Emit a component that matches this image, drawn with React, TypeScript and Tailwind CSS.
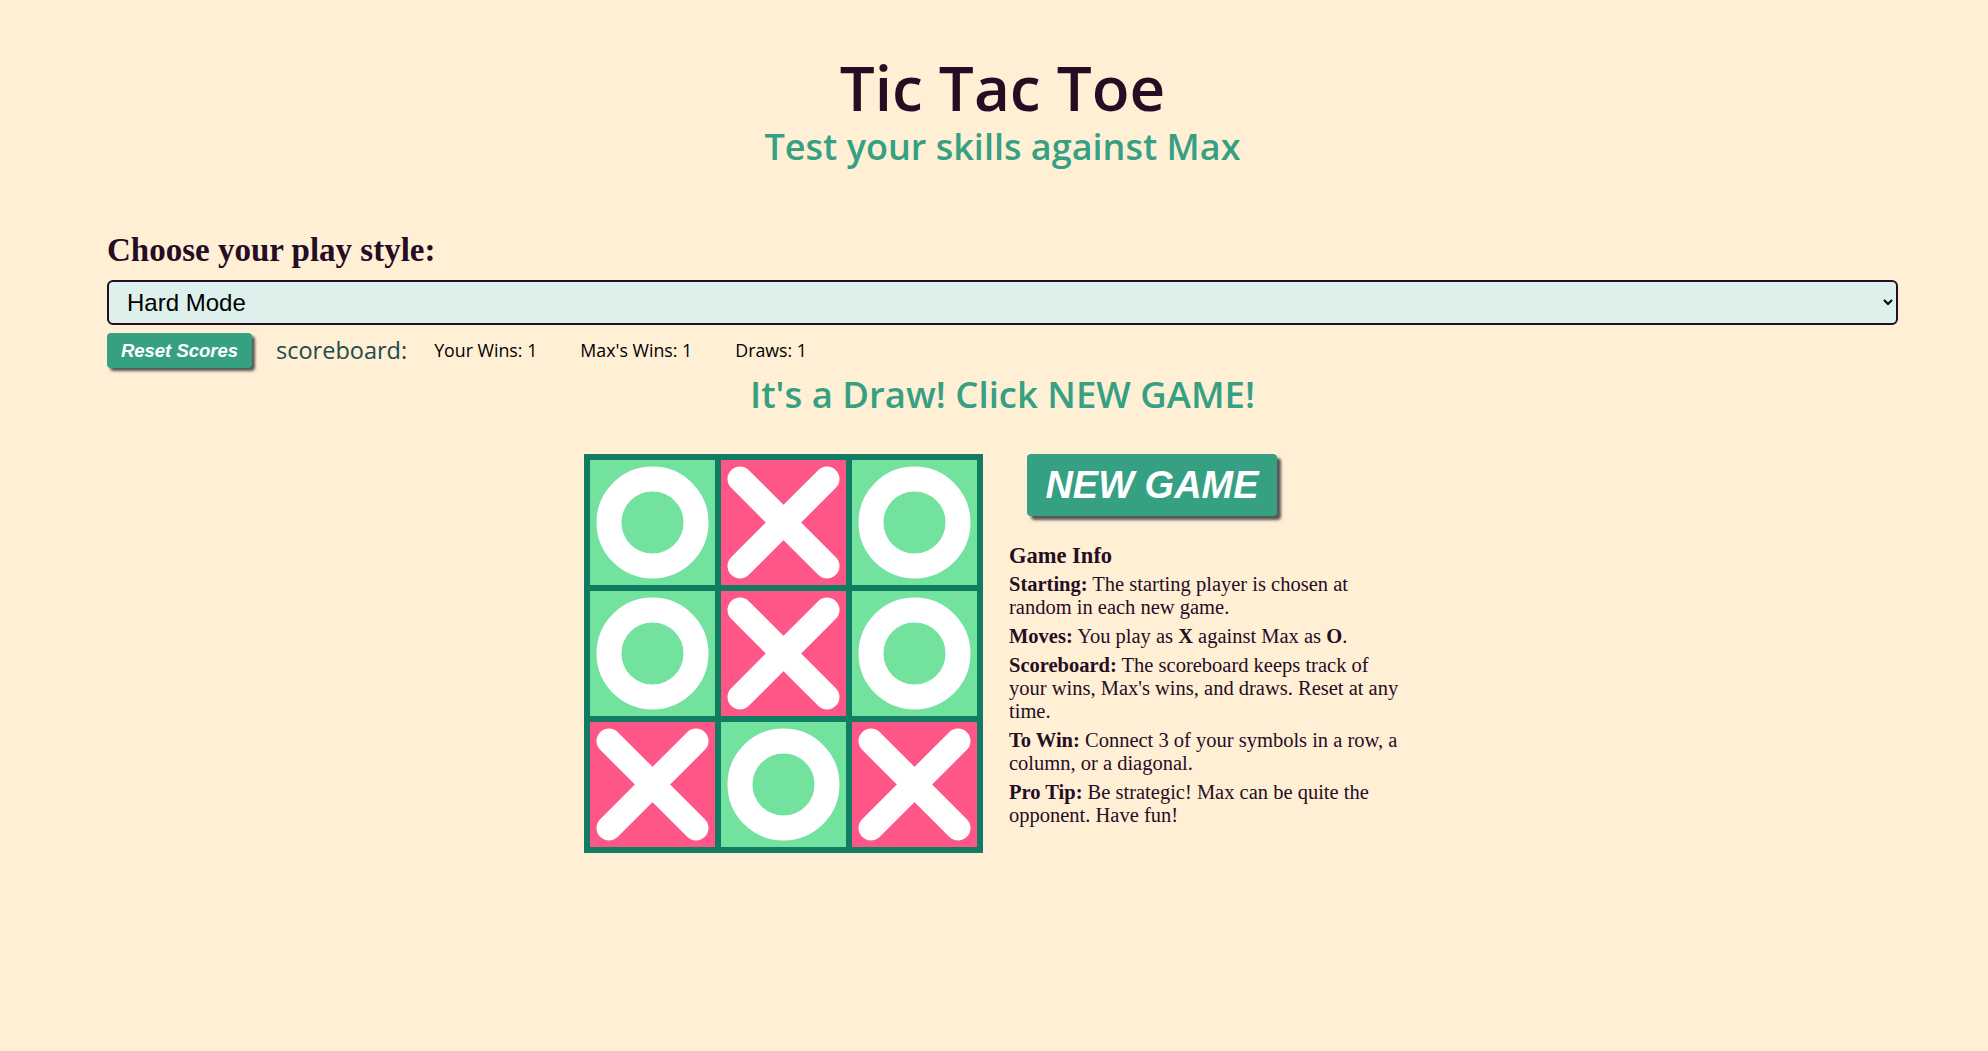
import { useState } from "react";

type Mark = "X" | "O";

const board: Mark[] = ["O", "X", "O", "O", "X", "O", "X", "O", "X"];

const heading = { fontFamily: '"Open Sans", "Noto Sans", sans-serif' };
const serif = { fontFamily: '"Liberation Serif", "DejaVu Serif", serif' };
const arial = { fontFamily: '"Liberation Sans", Arial, sans-serif' };

const Cell = ({ mark }: { mark: Mark }) => {
  if (mark === "O") {
    return (
      <div className="w-[125px] h-[125px] bg-[#73e29e]">
        <svg width="125" height="125" viewBox="0 0 125 125">
          <circle cx="62.5" cy="62.5" r="43.5" fill="none" stroke="#fff" strokeWidth="25" />
        </svg>
      </div>
    );
  }
  return (
    <div className="w-[125px] h-[125px] bg-[#fe5686]">
      <svg width="125" height="125" viewBox="0 0 125 125">
        <path d="M19 19 L106 106 M106 19 L19 106" stroke="#fff" strokeWidth="25" strokeLinecap="round" />
      </svg>
    </div>
  );
};

const App = () => {
  const [mode, setMode] = useState<string>("hard");
  const scores = { you: 1, max: 1, draws: 1 };

  return (
    <div className="min-h-[1051px] bg-[#ffefd5] pl-[107px] pr-[90px] pt-[51px]">
      <div className="text-center" style={heading}>
        <h1 className="text-[62px] leading-[72px] font-semibold text-[#250d24]">Tic Tac Toe</h1>
        <h2 className="mt-[4px] text-[36px] leading-[40px] font-semibold text-[#36a083]">Test your skills against Max</h2>
      </div>

      <h3 className="mt-[64px] text-[33px] leading-[38px] font-bold text-[#250d24]" style={serif}>
        Choose your play style:
      </h3>
      <select
        value={mode}
        onChange={(e) => setMode(e.target.value)}
        className="mt-[11px] block w-full h-[45px] pl-[14px] pr-[8px] text-[24px] bg-[#ddf0eb] border-2 border-[#250d24] rounded-md text-black"
        style={arial}
      >
        <option value="easy">Easy Mode</option>
        <option value="hard">Hard Mode</option>
      </select>

      <div className="mt-[8px] flex items-center">
        <button
          className="w-[145px] h-[35px] bg-[#36a083] text-white text-[18.5px] font-bold italic rounded-[4px] shadow-[3px_3px_3px_#555]"
          style={arial}
        >
          Reset Scores
        </button>
        <span className="ml-[24px] text-[23.5px] text-[#1b4b4a]" style={heading}>scoreboard:</span>
        <span className="ml-[27px] text-[17.8px] text-black" style={heading}>Your Wins: {scores.you}</span>
        <span className="ml-[43px] text-[17.8px] text-black" style={heading}>Max's Wins: {scores.max}</span>
        <span className="ml-[43px] text-[17.8px] text-black" style={heading}>Draws: {scores.draws}</span>
      </div>

      <p className="mt-[4px] text-center text-[36.5px] leading-[44px] font-semibold text-[#36a083]" style={heading}>
        It's a Draw! Click NEW GAME!
      </p>

      <div className="mt-[38px] flex justify-center items-start gap-[26px]">
        <div className="grid grid-cols-3 gap-[6px] p-[6px] bg-[#127c62]">
          {board.map((m, i) => (
            <Cell key={i} mark={m} />
          ))}
        </div>
        <div className="w-[412px]">
          <button
            className="ml-[18px] w-[250px] h-[62px] bg-[#36a083] text-white text-[38px] font-bold italic rounded-[4px] shadow-[4px_4px_3px_#555]"
            style={arial}
          >
            NEW GAME
          </button>
          <div className="mt-[25px] w-[400px] text-[20.5px] leading-[23px] text-[#250d24]" style={serif}>
            <h4 className="text-[22.5px] leading-[30px] font-bold">Game Info</h4>
            <p className="mt-[2px]">
              <b>Starting:</b> The starting player is chosen at random in each new game.
            </p>
            <p className="mt-[6px]">
              <b>Moves:</b> You play as <b>X</b> against Max as <b>O</b>.
            </p>
            <p className="mt-[6px]">
              <b>Scoreboard:</b> The scoreboard keeps track of your wins, Max's wins, and draws. Reset at any time.
            </p>
            <p className="mt-[6px]">
              <b>To Win:</b> Connect 3 of your symbols in a row, a column, or a diagonal.
            </p>
            <p className="mt-[6px]">
              <b>Pro Tip:</b> Be strategic! Max can be quite the opponent. Have fun!
            </p>
          </div>
        </div>
      </div>
    </div>
  );
};

export default App;
